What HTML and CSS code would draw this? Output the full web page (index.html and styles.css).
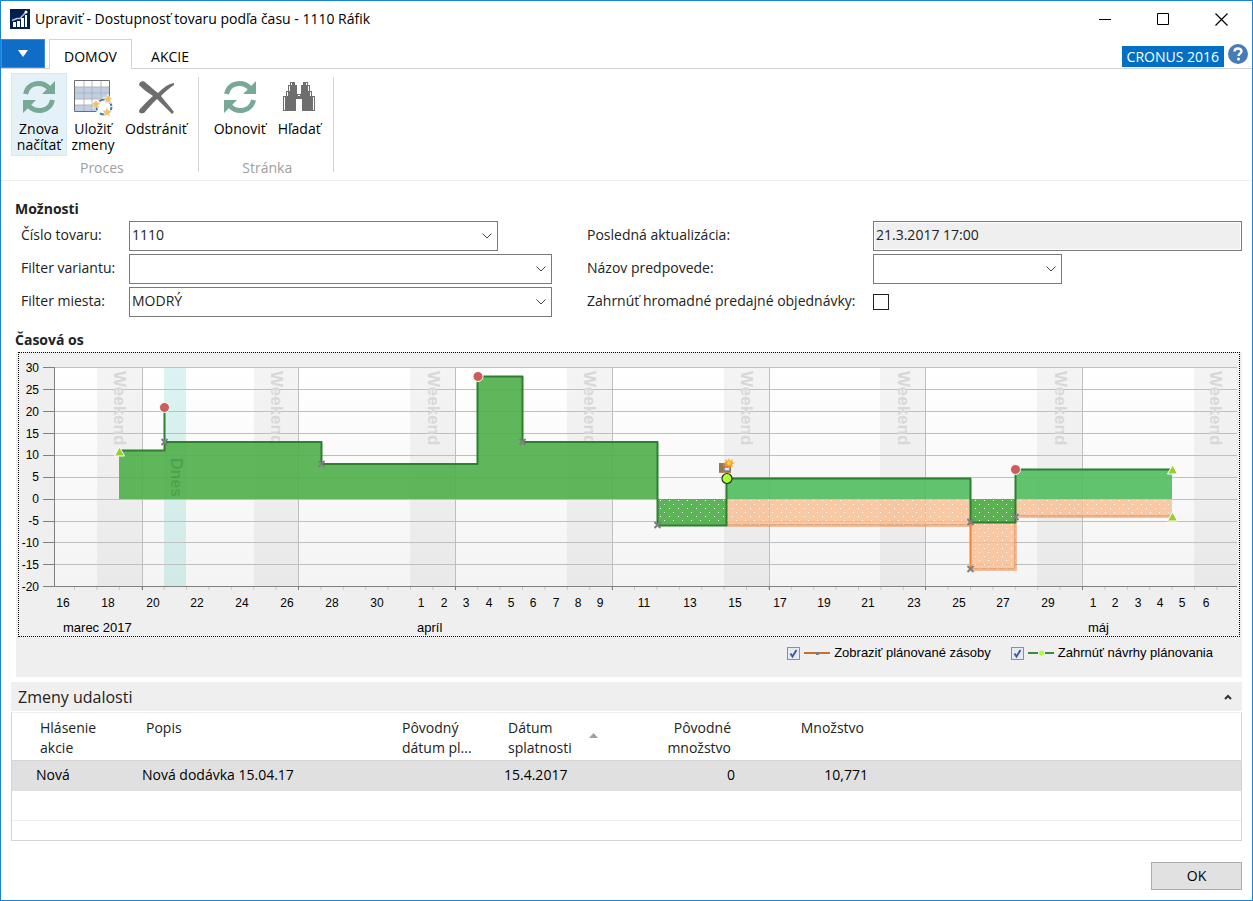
FILE: index.html
```html
<!DOCTYPE html>
<html lang="sk">

<head>
    <meta charset="UTF-8">
    <meta name="viewport" content="width=device-width, initial-scale=1.0">

    <title>Dostupnosť tovaru podľa času</title>
    <link rel="stylesheet" href="styles.css">
</head>

<body>
    <div class="window">
        <header class="title-bar">
            <svg class="app-icon" width="20" height="20" viewBox="0 0 20 20">
                <rect width="20" height="20" fill="#002050" />
                <path d="M3 13h3v5H3zM7 12h3v6H7zM11 9h3v9h-3zM15 6h2v12h-2z" fill="#fff" />
                <path d="M2 11.500L7 9.500 10 9.500 16 3" stroke="#b9c6d8" stroke-width="1.500" fill="none" />
                <circle cx="16" cy="3" r="1.500" fill="#fff" />
            </svg>
            <h1>Upraviť - Dostupnosť tovaru podľa času - 1110 Ráfik</h1>
            <div class="window-buttons">
                <button type="button" aria-label="Minimalizovať">
                    <svg width="13" height="13" viewBox="0 0 13 13"><path d="M0 6.500h12" stroke="#000" /></svg>
                </button>
                <button type="button" aria-label="Maximalizovať">
                    <svg width="13" height="13" viewBox="0 0 13 13"><path d="M.5.5h11v11H.5z" stroke="#000" fill="none" /></svg>
                </button>
                <button type="button" aria-label="Zavrieť">
                    <svg width="13" height="13" viewBox="0 0 13 13"><path d="M.5.5l12 12M12.500.5l-12 12" stroke="#000" stroke-width="1.200" /></svg>
                </button>
            </div>
        </header>

        <nav class="tabs">
            <button type="button" class="file-menu" aria-label="Ponuka">
                <svg width="10" height="7" viewBox="0 0 10 7"><path d="M0 0h10L5 7z" fill="#fff" /></svg>
            </button>
            <button type="button" class="tab active">DOMOV</button>
            <button type="button" class="tab">AKCIE</button>
            <span class="company">CRONUS 2016</span>
            <button type="button" class="help" aria-label="Pomocník">
                <svg width="20" height="20" viewBox="0 0 20 20">
                    <circle cx="10" cy="10" r="10" fill="#477bb3" />
                    <path d="M6.500 7.500C6.500 3.500 13.500 3.500 13.500 7.300C13.500 9.500 10.500 9.500 10.500 12" stroke="#fff" stroke-width="2.400" fill="none" />
                    <circle cx="10.500" cy="15" r="1.500" fill="#fff" />
                </svg>
            </button>
        </nav>

        <!-- Ribbon -->
        <div class="ribbon">
            <section class="group">
                <div class="actions">
                    <button type="button" class="action tall hot">
                        <svg width="40" height="40" viewBox="0 0 40 40">
                            <g fill="none" stroke="#78a997" stroke-width="5">
                                <path d="M6.500 17C9 6 22 3 30 11" />
                                <path d="M33.500 23C31 34 18 37 10 29" />
                            </g>
                            <path d="M36 4V17H23zM4 36V23H17z" fill="#78a997" />
                        </svg>
                        <span>Znova<br>načítať</span>
                    </button>
                    <button type="button" class="action tall">
                        <svg width="40" height="40" viewBox="0 0 40 40">
                            <path d="M2 3h34v31H2z" fill="#fff" />
                            <path d="M2 10h34v12H2zM2 28h34v6H2z" fill="#bdd0e6" />
                            <path d="M2 10h34M2 16h34M2 22h34M2 28h34M11 3v31M19 3v31M28 3v31" stroke="#b4b4b4" />
                            <path d="M1.500 3.500h35v31h-35z" fill="none" stroke="#6e6e6e" />
                            <circle cx="31" cy="30" r="9" fill="#fff" />
                            <circle cx="31" cy="30" r="7.500" fill="none" stroke="#4278b8" stroke-width="2" stroke-dasharray="6 4" />
                            <g fill="#efc16d" stroke="#fff" stroke-width=".6">
                                <path id="star" d="M35 17l1.500 3.300 3.500.3-2.600 2.500.9 3.600-3.300-1.900-3.300 1.900.9-3.600-2.600-2.500 3.500-.3z" />
                                <use href="#star" x="-12" y="5" />
                                <use href="#star" x="-1" y="13" />
                            </g>
                        </svg>
                        <span>Uložiť<br>zmeny</span>
                    </button>
                    <button type="button" class="action">
                        <svg width="40" height="40" viewBox="0 0 40 40">
                            <path d="M3 8C3 4 8 3 10 6C15 10 18 13 22 16C27 11 32 7 38 6L38 8C33 11 29 15 25 19C29 24 34 30 38 35L36 37C31 32 26 27 21 22C16 27 12 31 9 35C6 38 1 36 4 32C8 28 12 23 17 19C12 16 7 12 3 8Z" fill="#6e6e6e" />
                        </svg>
                        <span>Odstrániť</span>
                    </button>
                </div>
                <h2>Proces</h2>
            </section>
            <section class="group">
                <div class="actions">
                    <button type="button" class="action">
                        <svg width="40" height="40" viewBox="0 0 40 40">
                            <g fill="none" stroke="#78a997" stroke-width="5">
                                <path d="M6.500 17C9 6 22 3 30 11" />
                                <path d="M33.500 23C31 34 18 37 10 29" />
                            </g>
                            <path d="M36 4V17H23zM4 36V23H17z" fill="#78a997" />
                        </svg>
                        <span>Obnoviť</span>
                    </button>
                    <button type="button" class="action">
                        <svg width="40" height="40" viewBox="0 0 40 40">
                            <path d="M11 5h5v3h2v9h4V8h2V5h5v3h2v6h2v5h3v15H23V22h-6v12H4V19h3v-5h2V8h2z" fill="#6e6e6e" />
                            <path d="M5.500 20v13M8.500 15v4M10.500 9v5M12.500 6v2M34.500 20v13M31.500 15v4M29.500 9v5M27.500 6v2M19 18.500h2" fill="none" stroke="#fff" />
                        </svg>
                        <span>Hľadať</span>
                    </button>
                </div>
                <h2>Stránka</h2>
            </section>
        </div>

        <main>
            <h3>Možnosti</h3>
            <form class="options">
                <div class="column">
                    <div class="field">
                        <label for="item">Číslo tovaru:</label>
                        <select id="item" class="item-select">
                            <option>1110</option>
                        </select>
                    </div>
                    <div class="field">
                        <label for="variant">Filter variantu:</label>
                        <select id="variant">
                            <option></option>
                        </select>
                    </div>
                    <div class="field">
                        <label for="location">Filter miesta:</label>
                        <select id="location">
                            <option>MODRÝ</option>
                        </select>
                    </div>
                </div>
                <div class="column wide-labels">
                    <div class="field">
                        <label for="updated">Posledná aktualizácia:</label>
                        <input type="text" id="updated" value="21.3.2017 17:00" readonly>
                    </div>
                    <div class="field">
                        <label for="forecast">Názov predpovede:</label>
                        <select id="forecast" class="forecast-select">
                            <option></option>
                        </select>
                    </div>
                    <div class="field">
                        <label for="blanket">Zahrnúť hromadné predajné objednávky:</label>
                        <input type="checkbox" id="blanket">
                    </div>
                </div>
            </form>

            <h3>Časová os</h3>
            <div class="timeline">
                <svg class="chart" viewBox="0 0 1220 283" role="img" aria-label="Časová os">
                    <defs>
                        <linearGradient id="plot" x1="0" y1="0" x2="0" y2="1">
                            <stop offset="0" stop-color="#fff" />
                            <stop offset="1" stop-color="#f4f4f4" />
                        </linearGradient>
                        <pattern id="dots" width="9" height="8" patternUnits="userSpaceOnUse">
                            <path d="M2 3h1v1H2zM6 7h1v1H6z" fill="#fff" />
                        </pattern>
                        <g id="cross">
                            <path d="M-3-3L3 3M3-3L-3 3" stroke="#7f7f7f" stroke-width="2" />
                        </g>
                        <circle id="ball" r="5" fill="#cd5c5c" stroke="#fff" />
                        <path id="up" d="M0-5L5 4H-5z" fill="#9acd32" stroke="#fff" />
                    </defs>

                    <rect x="35" y="14" width="1183" height="220" fill="url(#plot)" />

                    <!-- weekends and today -->
                    <g fill="#000" fill-opacity=".045">
                        <rect x="78" y="15" width="45" height="219" />
                        <rect x="235" y="15" width="45" height="219" />
                        <rect x="391" y="15" width="45" height="219" />
                        <rect x="548" y="15" width="45" height="219" />
                        <rect x="705" y="15" width="45" height="219" />
                        <rect x="861" y="15" width="45" height="219" />
                        <rect x="1018" y="15" width="45" height="219" />
                        <rect x="1175" y="15" width="43" height="219" />
                    </g>
                    <rect x="145" y="15" width="22" height="219" fill="#20b2aa" fill-opacity=".16" />

                    <path d="M24 14.500H1218M24 36.500H1218M24 58.500H1218M24 80.500H1218M24 102.500H1218M24 124.500H1218M24 146.500H1218M24 168.500H1218M24 189.500H1218M24 211.500H1218" class="grid" />
                    <path d="M123.500 14V234M279.500 14V234M436.500 14V234M593.500 14V234M750.500 14V234M906.500 14V234M1063.500 14V234" class="grid" />

                    <g class="band-text">
                        <text transform="translate(95 18) rotate(90)">Weekend</text>
                        <text transform="translate(252 18) rotate(90)">Weekend</text>
                        <text transform="translate(409 18) rotate(90)">Weekend</text>
                        <text transform="translate(565 18) rotate(90)">Weekend</text>
                        <text transform="translate(722 18) rotate(90)">Weekend</text>
                        <text transform="translate(879 18) rotate(90)">Weekend</text>
                        <text transform="translate(1036 18) rotate(90)">Weekend</text>
                        <text transform="translate(1191 18) rotate(90)">Weekend</text>
                    </g>

                    <!-- axes -->
                    <path d="M24 14.500h11M24 36.500h11M24 58.500h11M24 80.500h11M24 102.500h11M24 124.500h11M24 146.500h11M24 168.500h11M24 189.500h11M24 211.500h11M24 233.500H1218M35.500 14V234" class="axis" />
                    <path d="M55 235.500H1218" stroke="#c8c8c8" stroke-width="3" stroke-dasharray="1 21.400" />
                    <path d="M123.500 234v3M279.500 234v3M436.500 234v3M593.500 234v3M750.500 234v3M906.500 234v3M1063.500 234v3" class="axis" />

                    <!-- planned inventory -->
                    <path d="M707 146V172.500H951.500V216.500H996.500V163.500H1153V146z" fill="#f9bb8f" fill-opacity=".8" />
                    <path d="M708 146V173H952V217H997V164H1153V146z" fill="url(#dots)" />
                    <path d="M707 172.500H951.500M951.500 216.500H996.500V163.500H1153" fill="none" stroke="#e0722a" stroke-opacity=".4" stroke-width="3" />
                    <path d="M951.500 170V216" stroke="#ee8334" stroke-width="2" />

                    <!-- projected inventory -->
                    <path d="M100 146V97.500H145.500V89H302.500V111H458.500V23.500H503.500V89H638.500V146z" fill="#4fae48" fill-opacity=".9" />
                    <path d="M638.500 146H707.500V172.500H638.500zM951.500 146H996.500V169.500H951.500z" fill="#52b04d" fill-opacity=".95" />
                    <path d="M639 146H707V171H639zM952 146H996V168H952z" fill="url(#dots)" />
                    <path d="M707.500 146V125.500H951.500V146zM996.500 146V116.500H1153V146z" fill="#50bd5e" fill-opacity=".9" />
                    <path d="M100 97.500H145.500V54.500V89H302.500V111H458.500V23.500H503.500V89H638.500V172.500H707.500V125.500H951.500V169.500H996.500V116.500H1153" class="projected" />
                    <text class="today" transform="translate(152 105) rotate(90)">Dnes</text>

                    <!-- event markers -->
                    <use href="#up" x="100.500" y="99" />
                    <use href="#up" x="1153.500" y="117" />
                    <use href="#up" x="1153.500" y="164" />
                    <use href="#cross" x="145.500" y="89" />
                    <use href="#cross" x="302.500" y="111" />
                    <use href="#cross" x="503.500" y="89" />
                    <use href="#cross" x="638.500" y="172" />
                    <use href="#cross" x="951.500" y="169" />
                    <use href="#cross" x="951.500" y="216" />
                    <use href="#cross" x="996.500" y="164" />
                    <use href="#ball" x="145.500" y="54.500" />
                    <use href="#ball" x="459" y="23.500" />
                    <use href="#ball" x="996.500" y="116.500" />
                    <path d="M700 110h12v10h-12z" fill="#b58a55" />
                    <path d="M700 110h4v9h-4z" fill="#9b7547" />
                    <path d="M705 114h6v4h-6z" fill="#dfe3f0" stroke="#5d5f87" />
                    <path d="M710 105l1 3 3-2-1 3 3 1-3 1 1 3-3-1-1 3-1-3-3 1 1-3-3-1 3-1-1-3 3 2z" fill="#f9a01b" />
                    <circle cx="710" cy="110" r="2" fill="#ffd23c" />
                    <circle cx="708" cy="125.500" r="5" fill="#adff2f" stroke="#2b2b2b" stroke-width="1.200" />

                    <g class="scale value-scale">
                        <text x="20" y="19">30</text>
                        <text x="20" y="41">25</text>
                        <text x="20" y="63">20</text>
                        <text x="20" y="85">15</text>
                        <text x="20" y="106">10</text>
                        <text x="20" y="128">5</text>
                        <text x="20" y="150">0</text>
                        <text x="20" y="172">-5</text>
                        <text x="20" y="194">-10</text>
                        <text x="20" y="216">-15</text>
                        <text x="20" y="238">-20</text>
                    </g>
                    <g class="scale day-scale">
                        <text x="44" y="254">16</text>
                        <text x="89" y="254">18</text>
                        <text x="134" y="254">20</text>
                        <text x="178" y="254">22</text>
                        <text x="223" y="254">24</text>
                        <text x="268" y="254">26</text>
                        <text x="313" y="254">28</text>
                        <text x="358" y="254">30</text>
                        <text x="402" y="254">1</text>
                        <text x="425" y="254">2</text>
                        <text x="447" y="254">3</text>
                        <text x="470" y="254">4</text>
                        <text x="492" y="254">5</text>
                        <text x="514" y="254">6</text>
                        <text x="537" y="254">7</text>
                        <text x="559" y="254">8</text>
                        <text x="581" y="254">9</text>
                        <text x="625" y="254">11</text>
                        <text x="671" y="254">13</text>
                        <text x="716" y="254">15</text>
                        <text x="761" y="254">17</text>
                        <text x="805" y="254">19</text>
                        <text x="849" y="254">21</text>
                        <text x="895" y="254">23</text>
                        <text x="940" y="254">25</text>
                        <text x="984" y="254">27</text>
                        <text x="1029" y="254">29</text>
                        <text x="1074" y="254">1</text>
                        <text x="1096" y="254">2</text>
                        <text x="1119" y="254">3</text>
                        <text x="1141" y="254">4</text>
                        <text x="1163" y="254">5</text>
                        <text x="1187" y="254">6</text>
                    </g>
                    <g class="month-scale">
                        <text x="44" y="279">marec 2017</text>
                        <text x="398" y="279">apríl</text>
                        <text x="1069" y="279">máj</text>
                    </g>
                </svg>
                <div class="legend">
                    <label>
                        <input type="checkbox" checked>
                        <svg width="26" height="8" viewBox="0 0 26 8">
                            <path d="M0 4h26" stroke="#cb6d2b" stroke-width="2" />
                            <path d="M12 3h3v3h-3z" fill="#7f7f7f" />
                        </svg>
                        Zobraziť plánované zásoby
                    </label>
                    <label>
                        <input type="checkbox" checked>
                        <svg width="26" height="8" viewBox="0 0 26 8">
                            <path d="M0 4h10M17 4h9" stroke="#3a8a3f" stroke-width="2" />
                            <circle cx="13.500" cy="4" r="2.500" fill="#adff2f" />
                        </svg>
                        Zahrnúť návrhy plánovania
                    </label>
                </div>
            </div>

            <!-- Event changes -->
            <section class="changes">
                <div class="changes-title">
                    <h4>Zmeny udalosti</h4>
                    <button type="button" aria-label="Zbaliť">
                        <svg width="8" height="6" viewBox="0 0 8 6"><path d="M1 5l3-3 3 3" stroke="#333" stroke-width="2" fill="none" /></svg>
                    </button>
                </div>
                <table>
                    <colgroup>
                        <col class="col-action">
                        <col class="col-text">
                        <col class="col-date">
                        <col class="col-date">
                        <col class="col-qty">
                        <col class="col-qty">
                        <col>
                    </colgroup>
                    <thead>
                        <tr>
                            <th>Hlásenie<br>akcie</th>
                            <th>Popis</th>
                            <th>Pôvodný<br>dátum pl...</th>
                            <th>
                                <div class="sorted">
                                    <span>Dátum<br>splatnosti</span>
                                    <svg width="9" height="5" viewBox="0 0 9 5"><path d="M4.500 0L9 5H0z" fill="#a0a0a0" /></svg>
                                </div>
                            </th>
                            <th class="number">Pôvodné<br>množstvo</th>
                            <th class="number">Množstvo</th>
                            <th></th>
                        </tr>
                    </thead>
                    <tbody>
                        <tr class="selected">
                            <td>Nová</td>
                            <td>Nová dodávka 15.04.17</td>
                            <td></td>
                            <td>15.4.2017</td>
                            <td class="number">0</td>
                            <td class="number">10,771</td>
                            <td></td>
                        </tr>
                        <tr class="blank">
                            <td colspan="7"></td>
                        </tr>
                    </tbody>
                </table>
            </section>
        </main>

        <footer>
            <button type="button" class="ok">OK</button>
        </footer>
    </div>
</body>

</html>
```
FILE: styles.css
```css
* {
    box-sizing: border-box;
}

body {
    margin: 0;
    font-family: "Open Sans", "Noto Sans", sans-serif;
    font-size: 14px;
    line-height: 20px;
    color: #222;
    background-color: #fff;
}

h1,
h2,
h3,
h4 {
    margin: 0;
    font-size: 14px;
    font-weight: normal;
}

button {
    margin: 0;
    padding: 0;
    border: none;
    background: none;
    font: inherit;
    color: #000;
    cursor: pointer;
}

svg {
    display: block;
}

.window {
    display: flex;
    flex-direction: column;
    min-height: 100vh;
    border: 1px solid #1883d7;
}

/* Title bar */
.title-bar {
    display: flex;
    align-items: center;
    height: 38px;
    padding: 0 2px 2px 9px;
    gap: 5px;
}

.title-bar h1 {
    flex: 1;
    color: #000;
}

.window-buttons {
    display: flex;
}

.window-buttons button {
    display: flex;
    align-items: center;
    justify-content: center;
    width: 58px;
    height: 30px;
}

/* Tabs */
.tabs {
    display: flex;
    height: 30px;
    padding-right: 4px;
    border-bottom: 1px solid #d4d4d4;
}

.file-menu {
    display: flex;
    align-items: center;
    justify-content: center;
    width: 44px;
    margin-right: 4px;
    border: 1px solid #3b8ad8;
    background-color: #0f6cc7;
}

.tab {
    width: 76px;
    height: 30px;
    padding-top: 4px;
    border: 1px solid transparent;
    border-bottom: none;
}

.tab.active {
    width: 83px;
    border-color: #d4d4d4;
    background-color: #fff;
}

.company {
    align-self: flex-end;
    margin: 0 4px 1px auto;
    padding: 0 5px;
    background-color: #0070c6;
    color: #fff;
    line-height: 21px;
}

.help {
    align-self: center;
}

/* Ribbon */
.ribbon {
    display: flex;
    height: 112px;
    padding: 4px 0 0 10px;
    border-bottom: 1px solid #efefef;
}

.group {
    display: flex;
    flex-direction: column;
    justify-content: space-between;
    height: 103px;
    padding-right: 6px;
    background: linear-gradient(#d4d4d4, #d4d4d4) right 4px / 1px 95px no-repeat;
}

.group + .group {
    padding: 0 7px 0 9px;
}

.group h2 {
    color: #a0a0a0;
    text-align: center;
    line-height: 16px;
}

.actions {
    display: flex;
}

.action {
    display: flex;
    flex-direction: column;
    align-items: center;
    gap: 4px;
    height: 83px;
    padding: 3px 5px 0;
    border: 1px solid transparent;
    line-height: 16px;
}

.action.tall {
    width: 52px;
    padding: 3px 0 0;
}

.action.hot {
    width: 56px;
    border-color: #d5e9f5;
    background-color: #e5f1f9;
}

/* Content */
main {
    padding: 18px 10px 0;
}

h3 {
    padding-left: 4px;
    font-weight: bold;
}

.options {
    display: flex;
    gap: 35px;
    margin: 2px 0 13px;
    padding-left: 10px;
}

.column {
    display: flex;
    flex: 531;
    flex-direction: column;
    gap: 3px;
}

.wide-labels {
    flex: 655;
}

.field {
    display: flex;
    height: 30px;
}

.field label {
    flex: 0 0 108px;
    line-height: 28px;
    white-space: nowrap;
}

.wide-labels label {
    flex-basis: 286px;
}

select,
input[type="text"] {
    flex: 1;
    min-width: 0;
    height: 30px;
    margin: 0;
    padding: 0 2px 2px;
    border: 1px solid #7a7a7a;
    border-radius: 0;
    background-color: #fff;
    font: inherit;
    color: #222;
    appearance: none;
}

select {
    background-image: url("data:image/svg+xml,%3Csvg xmlns='http://www.w3.org/2000/svg' width='10' height='6'%3E%3Cpath d='M.5.5L5 5 9.500.5' fill='none' stroke='%23444'/%3E%3C/svg%3E");
    background-repeat: no-repeat;
    background-position: right 5px center;
}

input[type="text"] {
    padding-bottom: 4px;
    box-shadow: inset 0 0 0 1px #fff;
    background-color: #efefef;
}

.item-select {
    margin-right: 54px;
}

.forecast-select {
    flex: 0 0 189px;
}

.field input[type="checkbox"] {
    width: 16px;
    height: 16px;
    margin: 7px 0;
    border: 1px solid #222;
    background-color: #fff;
    appearance: none;
}

/* Timeline */
.timeline {
    margin: 2px 0 5px 5px;
    padding: 0 2px;
    background-color: #efefef;
    font-family: "Liberation Sans", Arial, sans-serif;
    color: #000;
}

.chart {
    width: 100%;
    height: auto;
    border: 1px dotted #000;
}

.grid {
    stroke: #bfbfbf;
}

.axis {
    stroke: #808080;
}

.projected {
    fill: none;
    stroke: #2f7f2f;
    stroke-width: 2;
    stroke-linejoin: round;
}

.band-text {
    fill: #d8d8d8;
    font-size: 17px;
    font-weight: bold;
}

.today {
    fill: #004000;
    fill-opacity: 0.16;
    font-size: 16px;
    font-weight: bold;
}

.scale {
    font-size: 12px;
}

.value-scale {
    text-anchor: end;
}

.day-scale {
    text-anchor: middle;
}

.month-scale {
    font-size: 13px;
}

.legend {
    display: flex;
    justify-content: flex-end;
    gap: 20px;
    height: 40px;
    padding: 6px 27px 0 0;
    font-size: 13px;
}

.legend label {
    display: flex;
    align-items: center;
    gap: 4px;
    height: 20px;
}

.legend input {
    width: 13px;
    height: 13px;
    margin: 0;
    border: 1px solid #8e8f8f;
    background: #e6eaf2 url("data:image/svg+xml,%3Csvg xmlns='http://www.w3.org/2000/svg' width='9' height='9'%3E%3Cpath d='M1.500 4.500L3.500 7.500 7.500 1' fill='none' stroke='%23445a9c' stroke-width='2'/%3E%3C/svg%3E") center no-repeat;
    appearance: none;
}

/* Event changes */
.changes-title {
    display: flex;
    align-items: center;
    justify-content: space-between;
    height: 29px;
    margin-bottom: 1px;
    padding: 0 10px 0 7px;
    background-color: #efefef;
}

.changes-title h4 {
    font-size: 16px;
}

.changes table {
    width: 100%;
    height: 129px;
    border: 1px solid #d4d4d4;
    border-top-color: #efefef;
    border-spacing: 0;
    table-layout: fixed;
}

.col-action {
    width: 126px;
}

.col-text {
    width: 256px;
}

.col-date {
    width: 106px;
}

.col-qty {
    width: 133px;
}

th {
    height: 48px;
    padding: 5px 8px 2px;
    border-bottom: 1px solid #d4d4d4;
    font-weight: normal;
    text-align: left;
    vertical-align: top;
    white-space: nowrap;
}

td {
    height: 30px;
    padding: 0 4px 2px;
    color: #000;
}

th:first-child {
    padding-left: 28px;
}

td:first-child {
    padding-left: 24px;
}

.number {
    text-align: right;
}

.sorted {
    display: flex;
    align-items: center;
    justify-content: space-between;
}

.sorted svg {
    margin-bottom: 5px;
}

.selected {
    background-color: #e0e0e0;
}

.blank td {
    border-bottom: 1px solid #efefef;
}

tbody::after {
    content: "";
    display: table-row;
    height: 19px;
}

/* Footer */
footer {
    display: flex;
    justify-content: flex-end;
    margin-top: auto;
    padding: 0 10px 10px;
}

.ok {
    width: 91px;
    height: 28px;
    border: 1px solid #adadad;
    background-color: #e1e1e1;
}
```
